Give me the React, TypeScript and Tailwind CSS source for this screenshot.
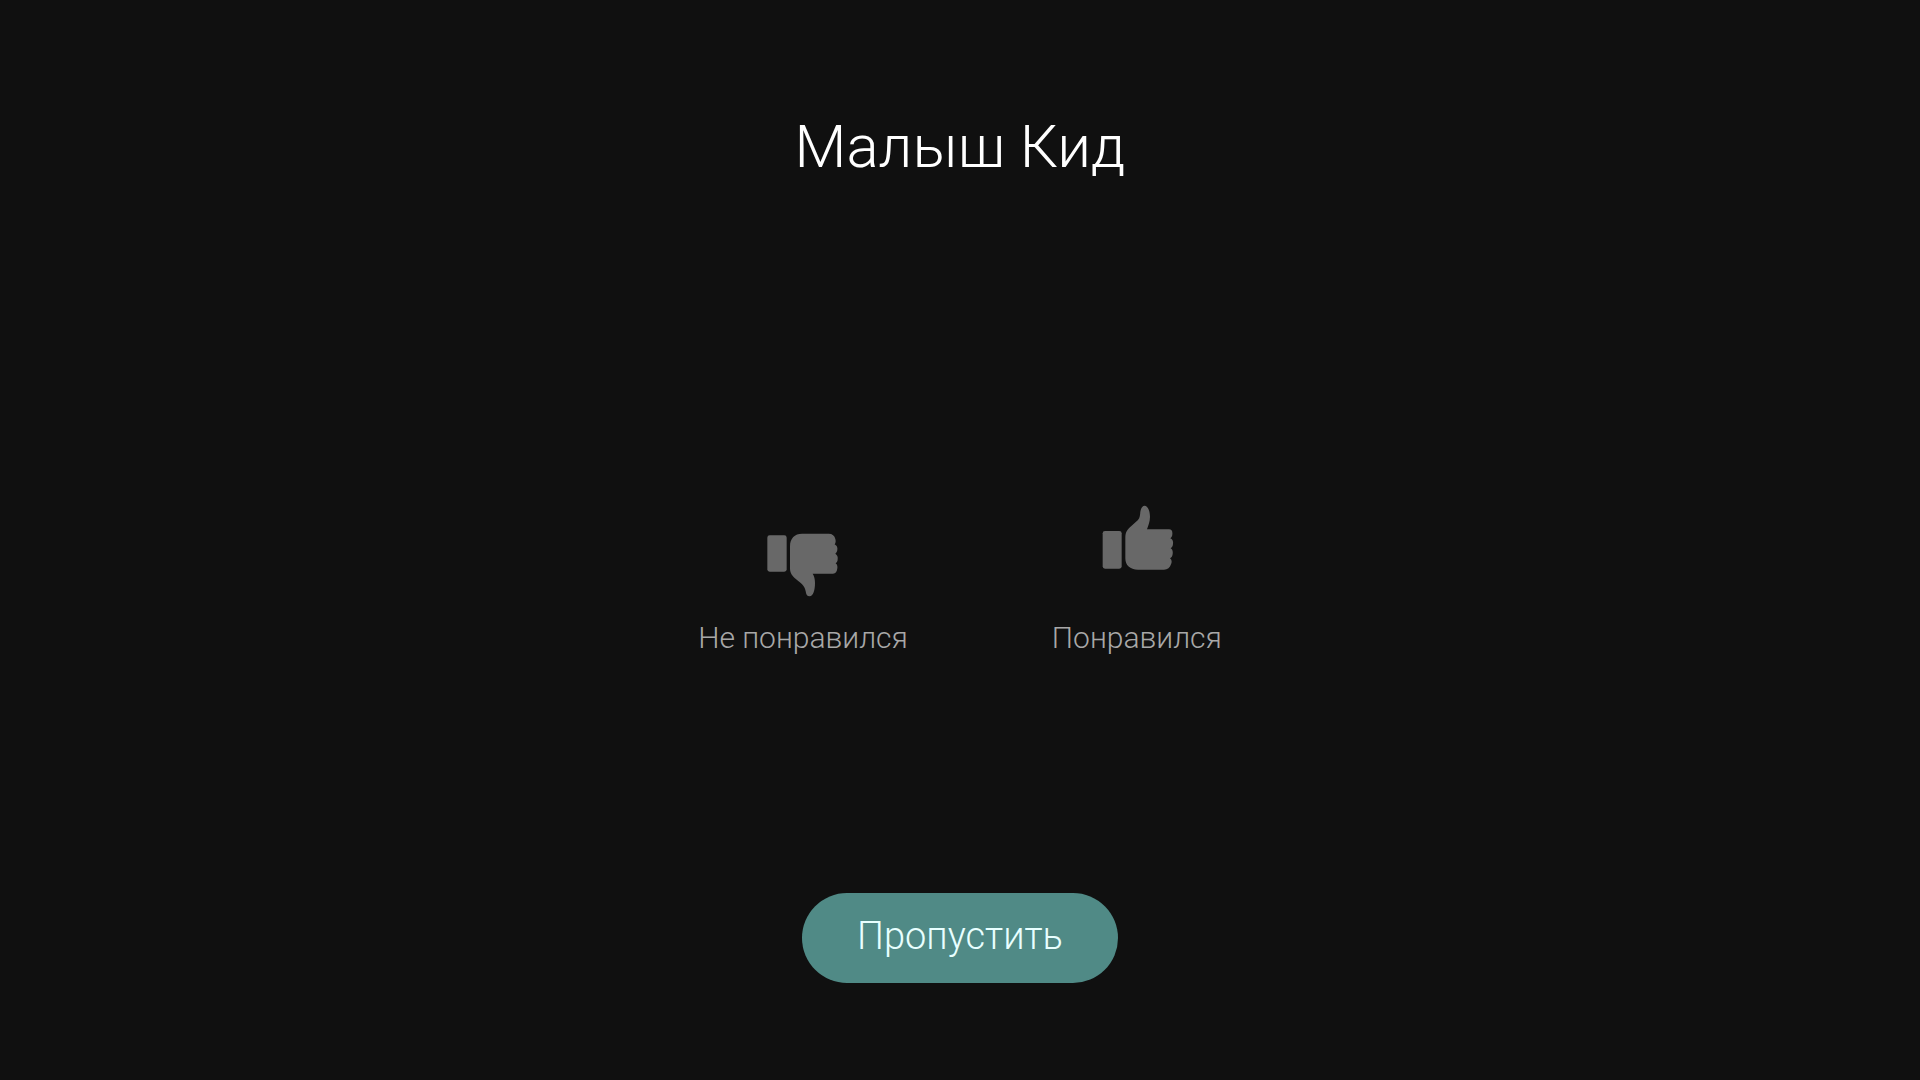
import React from "react";

function ThumbUp() {
  return (
    <svg viewBox="50 45 216 198" className="h-[66px] w-[72px]" fill="currentColor" aria-hidden="true">
      <rect x="52" y="123" width="57" height="113" rx="7" />
      <path d="M120 142C120 126 126 118 138 108L158 90C164 83 164 75 165 65C167 54 171 47 178 47C187 47 194 63 194 80C194 96 188 108 185 118H251C259 118 262 124 261 133C261 138 259 142 255 145C262 148 264 154 263 161C263 168 260 172 256 175C262 179 263 185 262 192C261 199 259 202 254 205C260 210 260 217 257 223C254 233 247 239 236 239H158C134 239 120 226 120 205Z" />
    </svg>
  );
}

function ThumbDown() {
  return (
    <svg viewBox="50 66 216 192" className="h-16 w-[72px]" fill="currentColor" aria-hidden="true">
      <rect x="54" y="73" width="58" height="109" rx="7" />
      <path d="M122 106C122 82 136 68 158 68H238C249 68 256 74 258 84C260 91 259 96 256 100C262 104 265 108 264 115C264 121 262 125 258 128C264 132 266 137 265 144C265 150 263 154 259 157C263 160 265 165 264 172C263 182 259 188 251 188H190C195 196 197 205 197 216C197 238 191 256 181 256C173 256 170 250 169 241C166 226 160 220 144 208C129 196 122 188 122 172Z" />
    </svg>
  );
}

export default function App() {
  return (
    <main className="flex min-h-screen flex-col items-center justify-between bg-[#101010] pt-[108px] pb-[97px] font-['Roboto',sans-serif] font-light">
      <h1 className="text-[60px] leading-[78px] text-white">Малыш Кид</h1>

      <div className="flex gap-36 pt-[84px] text-[#686868]">
        <button type="button" className="flex cursor-pointer flex-col items-start">
          <span className="flex h-[92px] items-end pl-[68px]">
            <ThumbDown />
          </span>
          <span className="mt-5 text-[30px] leading-[42px] text-[#a8a8a8]">Не понравился</span>
        </button>
        <button type="button" className="flex cursor-pointer flex-col items-start">
          <span className="flex h-[92px] items-start pl-[50px]">
            <ThumbUp />
          </span>
          <span className="mt-5 text-[30px] leading-[42px] text-[#a8a8a8]">Понравился</span>
        </button>
      </div>

      <button
        type="button"
        className="cursor-pointer rounded-full bg-[#508a86] px-[55px] pt-5 pb-6 text-[38px] leading-[46px] text-[#e8ffff]"
      >
        Пропустить
      </button>
    </main>
  );
}
